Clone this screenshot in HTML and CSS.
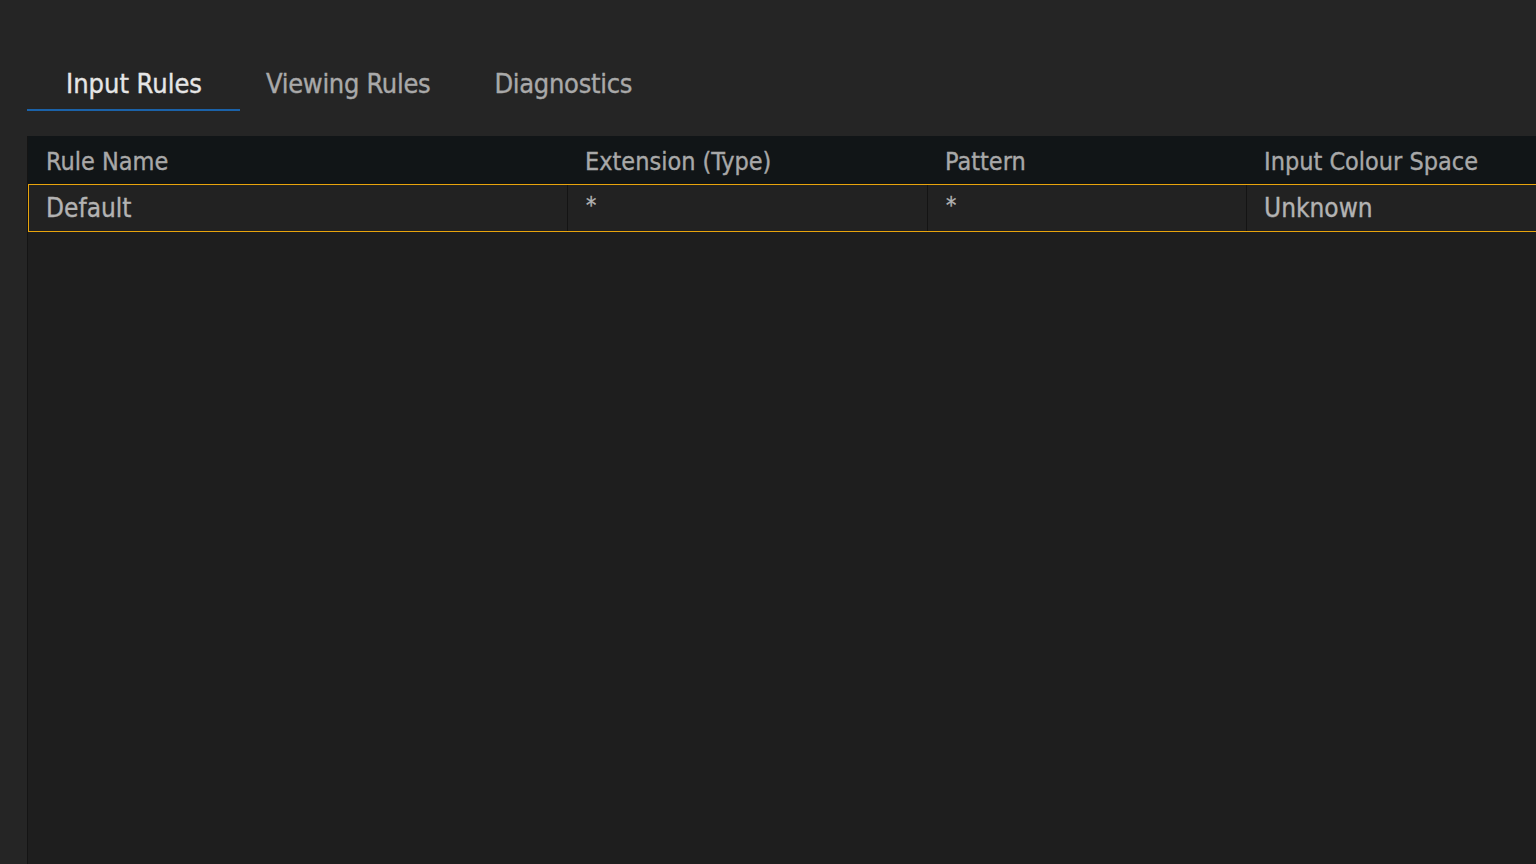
FILE: index.html
```html
<!DOCTYPE html>
<html lang="en">
<head>
  <meta charset="UTF-8" />
  <title>Colour Management Rules</title>
  <link rel="stylesheet" href="styles.css">
</head>
<body>
  <nav class="tabs">
    <div class="tab active">Input Rules</div>
    <div class="tab">Viewing Rules</div>
    <div class="tab">Diagnostics</div>
  </nav>

  <div class="rules-table">
    <div class="table-head">
      <div class="cell">Rule Name</div>
      <div class="cell">Extension (Type)</div>
      <div class="cell">Pattern</div>
      <div class="cell">Input Colour Space</div>
    </div>
    <div class="table-row selected">
      <div class="cell">Default</div>
      <div class="cell star">*</div>
      <div class="cell star">*</div>
      <div class="cell">Unknown</div>
    </div>
  </div>
</body>
</html>
```

FILE: styles.css
```css
:root {
  --bg: #252525;
  --table-bg: #1e1e1e;
  --head-bg: #111517;
  --row-bg: #222222;
  --text: #b3b3b3;
  --text-active: #e6e6e6;
  --accent: #1b62a8;
  --select: #e8a40c;
  --divider: #141414;
}

* {
  margin: 0;
  padding: 0;
  box-sizing: border-box;
}

html, body {
  height: 100%;
}

body {
  background-color: var(--bg);
  color: var(--text);
  font-family: "DejaVu Sans Condensed", "Liberation Sans", sans-serif;
  font-stretch: condensed;
  -webkit-text-stroke: 0.35px currentColor;
  overflow: hidden;
  display: flex;
  flex-direction: column;
}

.tabs {
  display: flex;
  padding: 60px 0 0 34px;
  height: 111px;
}

.tab {
  position: relative;
  padding: 8px 32px 0;
  height: 51px;
  font-size: 27px;
  color: #a9a9a9;
  white-space: nowrap;
}

.tab + .tab {
  letter-spacing: -0.3px;
}

.tab.active {
  color: var(--text-active);
}

.tab.active::after {
  content: '';
  position: absolute;
  left: -7px;
  right: -6px;
  bottom: 0;
  height: 2px;
  background-color: var(--accent);
}

.rules-table {
  flex: 1;
  margin: 25px 0 0 27px;
  width: 1600px;
  background-color: var(--table-bg);
  border-left: 1px solid var(--divider);
}

.table-head,
.table-row {
  display: grid;
  grid-template-columns: 539px 360px 319px 1fr;
  height: 48px;
  align-items: center;
}

.table-head {
  background-color: var(--head-bg);
  font-size: 25px;
  color: #a8a8a8;
}

.table-row {
  grid-template-columns: 538px 360px 319px 1fr;
  background-color: var(--row-bg);
  font-size: 26px;
  color: var(--text);
}

.table-row.selected {
  border: 1px solid var(--select);
}

.cell {
  padding-left: 18px;
  white-space: nowrap;
}

.table-head .cell {
  padding-top: 2px;
}

.table-row .cell {
  height: 100%;
  display: flex;
  align-items: center;
  border-left: 1px solid var(--divider);
}

.table-row .cell:first-child {
  border-left: none;
  padding-left: 17px;
}

.table-row .cell:last-child {
  padding-left: 17px;
}

.table-row .star {
  align-items: flex-start;
  padding-top: 7px;
  padding-left: 18px;
  font-size: 23px;
}
```
